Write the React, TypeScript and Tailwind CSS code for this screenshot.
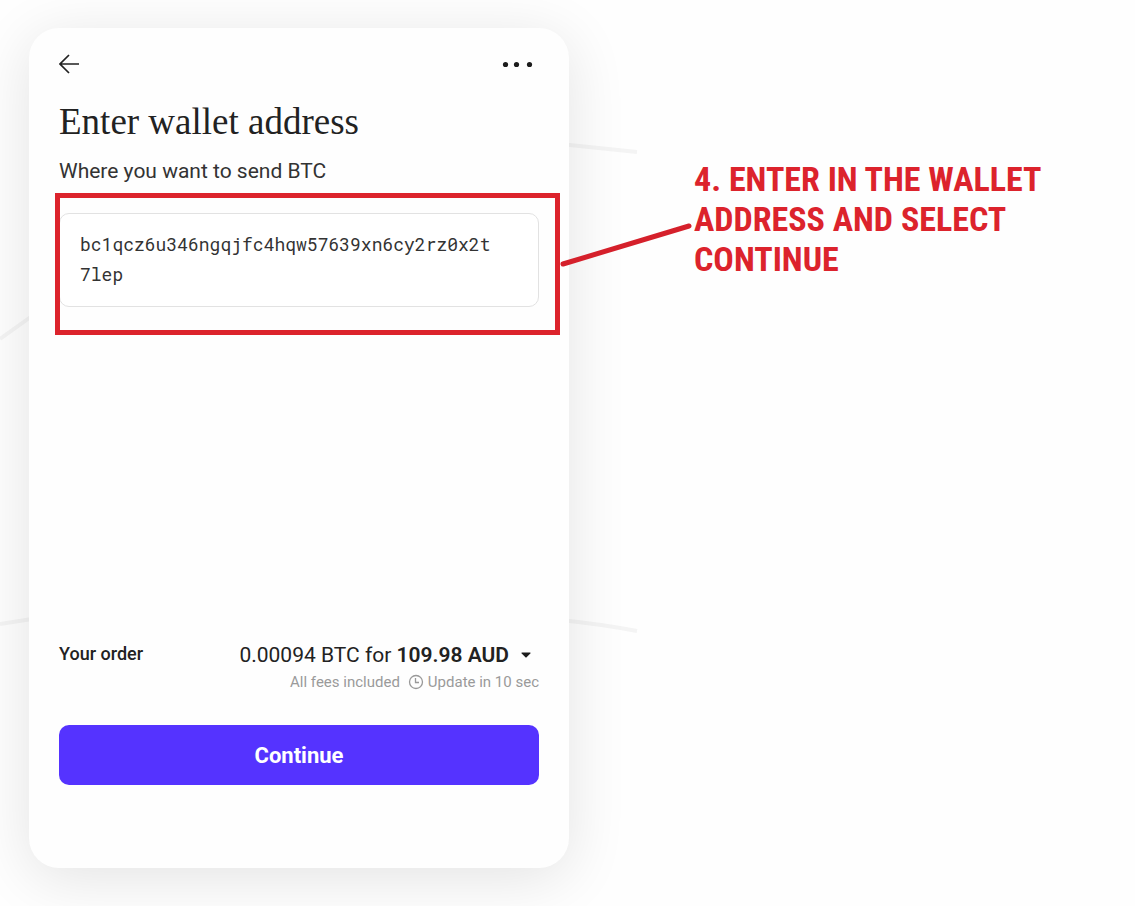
import { useState } from "react";

function Backdrop() {
  return (
    <svg
      className="pointer-events-none absolute top-0 left-0 -z-10"
      width="640"
      height="660"
      fill="none"
      stroke="#f4f4f4"
      strokeWidth="4"
      aria-hidden="true"
    >
      <path d="M0 339L32 316M0 624L32 619M560 144L637 152M560 620Q600 624 637 631" />
    </svg>
  );
}

function CardHeader() {
  return (
    <header className="flex items-center justify-between">
      <button type="button" aria-label="Back" className="py-px">
        <svg width="22" height="22" viewBox="0 0 22 22" fill="none" stroke="#222222" strokeWidth="1.7">
          <path d="M20 11H1.500M10 2L1 11L10 20" />
        </svg>
      </button>
      <button type="button" aria-label="More options" className="pr-1">
        <svg width="34" height="24" viewBox="0 0 34 24" fill="#1c1c1c">
          <circle cx="4.500" cy="12.500" r="2.600" />
          <circle cx="15.500" cy="12.500" r="2.600" />
          <circle cx="28.500" cy="12.500" r="2.600" />
        </svg>
      </button>
    </header>
  );
}

function AddressField() {
  const [address, setAddress] = useState("bc1qcz6u346ngqjfc4hqw57639xn6cy2rz0x2t7lep");
  return (
    <div className="relative mt-7">
      <textarea
        id="wallet-address"
        rows={2}
        value={address}
        spellCheck={false}
        onChange={(event) => setAddress(event.target.value)}
        className="block w-full resize-none overflow-hidden rounded-[10px] border border-[#e2e2e2] bg-white pt-[15px] pr-10 pb-[17px] pl-5 font-['Roboto_Mono','Liberation_Mono',monospace] text-[18px] leading-[30px] break-all text-[#333333] outline-none"
      />
      <div className="pointer-events-none absolute -top-5 -right-[21px] -bottom-7 -left-1 border-5 border-[#dc232c]" />
      <svg
        className="pointer-events-none absolute top-0 left-full ml-5"
        width="136"
        height="60"
        fill="none"
        stroke="#d5202b"
        strokeWidth="5"
        strokeLinecap="round"
        aria-hidden="true"
      >
        <path d="M4 51L130 13" />
      </svg>
    </div>
  );
}

function OrderSummary() {
  return (
    <section className="flex items-start justify-between">
      <h2 className="text-[18px] leading-[26px] font-medium text-[#222222]">Your order</h2>
      <div className="flex flex-col items-end">
        <button type="button" className="flex items-center pr-2 text-[21px] leading-7 text-[#222222]">
          <span>
            0.00094 BTC for <strong className="font-semibold">109.98 AUD</strong>
          </span>
          <svg className="ml-3" width="10" height="6" viewBox="0 0 10 6" fill="#1c1c1c" aria-hidden="true">
            <path d="M1 .5H9Q10 .7 9.300 1.500L5.600 5.200Q5 5.700 4.400 5.200L.7 1.500Q0 .7 1 .5Z" />
          </svg>
        </button>
        <p className="flex items-center text-[15px] leading-[26px] text-[#9a9a9a]">
          All fees included
          <svg
            className="mr-1 ml-2"
            width="16"
            height="16"
            viewBox="0 0 16 16"
            fill="none"
            stroke="#999999"
            strokeWidth="1.3"
            aria-hidden="true"
          >
            <circle cx="8" cy="8" r="6.500" />
            <path d="M7.500 4V8.500H11" />
          </svg>
          Update in 10 sec
        </p>
      </div>
    </section>
  );
}

export default function App() {
  return (
    <div className="relative isolate flex min-h-screen items-start gap-[125px] overflow-hidden bg-[#fefefe] py-7 pr-16 pl-[29px] font-['Roboto','Liberation_Sans',sans-serif]">
      <Backdrop />
      <main className="flex min-h-[840px] w-full max-w-[540px] flex-col rounded-[30px] bg-[#fefefe] px-[30px] pt-6 pb-[83px] shadow-[0_10px_60px_rgba(0,0,0,0.11)]">
        <CardHeader />
        <h1 className="mt-[26px] font-['Liberation_Serif',serif] text-[37px] leading-10 text-[#222222]">
          Enter wallet address
        </h1>
        <label htmlFor="wallet-address" className="mt-[15px] text-[21px] leading-7 text-[#333333]">
          Where you want to send BTC
        </label>
        <AddressField />
        <div className="mt-auto">
          <OrderSummary />
          <button
            type="button"
            className="mt-[30px] h-[60px] w-full rounded-[10px] bg-[#5533ff] text-[22px] font-bold text-white"
          >
            Continue
          </button>
        </div>
      </main>
      <aside className="w-[360px] pt-[131px] font-['Liberation_Sans_Narrow','Roboto_Condensed','Liberation_Sans',sans-serif] text-[34px] leading-10 font-bold text-[#dc232c]">
        4. ENTER IN THE WALLET ADDRESS AND SELECT CONTINUE
      </aside>
    </div>
  );
}
